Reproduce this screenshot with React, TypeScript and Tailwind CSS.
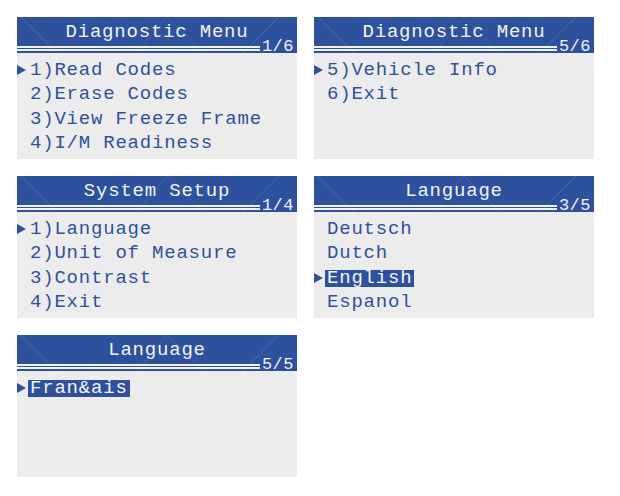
import React from 'react';

type PanelProps = {
  title: string;
  page: string;
  items: string[];
  selected: number;
  highlight?: boolean;
};

const Marker: React.FC = () => (
  <svg width="9" height="10" viewBox="0 0 9 10" className="block">
    <polygon points="0,0 9,5 0,10" fill="#2d519c" />
  </svg>
);

const Panel: React.FC<PanelProps> = ({ title, page, items, selected, highlight }) => {
  return (
    <div className="h-[142px] w-[280px] bg-[#ececec] flex flex-col">
      {/* header */}
      <div className="relative h-[36px] bg-[#2d519c] flex flex-col">
        <svg className="absolute inset-0 pointer-events-none" width="280" height="36">
          <line x1="4" y1="0" x2="40" y2="36" stroke="#ffffff" strokeOpacity="0.13" strokeWidth="1" />
          <line x1="120" y1="36" x2="150" y2="0" stroke="#ffffff" strokeOpacity="0.1" strokeWidth="1" />
          <line x1="150" y1="0" x2="186" y2="36" stroke="#ffffff" strokeOpacity="0.1" strokeWidth="1" />
          <line x1="226" y1="36" x2="262" y2="0" stroke="#ffffff" strokeOpacity="0.13" strokeWidth="1" />
        </svg>
        <div className="relative h-[24px] pt-[5px] text-center text-[19px] leading-[20px] tracking-[0.8px] text-[#f3f3f3]">
          {title}
        </div>
        <div className="relative h-[12px] flex items-start">
          <div className="flex-1 mt-[5px] flex flex-col gap-[1px]">
            <div className="h-[2px] bg-[#f3f3f3]" />
            <div className="h-[2px] bg-[#f3f3f3]" />
          </div>
          <span className="ml-[2px] pr-[3px] text-[17px] leading-[12px] tracking-[0.5px] text-[#f3f3f3]">
            {page}
          </span>
        </div>
      </div>

      {/* body */}
      <div className="pt-[5px] flex flex-col">
        {items.map((item, i) => (
          <div key={item} className="flex items-center h-[24.5px]">
            <div className="w-[11px] flex items-center">{i === selected && <Marker />}</div>
            {highlight && i === selected ? (
              <span className="px-[2px] bg-[#2d519c] text-[#f5f5f5] text-[19px] leading-[17px] tracking-[0.8px]">
                {item}
              </span>
            ) : (
              <span className="px-[2px] text-[#2f529b] text-[19px] leading-[17px] tracking-[0.8px]">{item}</span>
            )}
          </div>
        ))}
      </div>
    </div>
  );
};

const App: React.FC = () => {
  return (
    <div className="w-[620px] h-[496px] bg-white pl-[17px] pt-[17px] font-['Liberation_Mono',monospace]">
      <div className="grid grid-cols-[280px_280px] gap-x-[17px] gap-y-[17px]">
        <Panel
          title="Diagnostic Menu"
          page="1/6"
          items={['1)Read Codes', '2)Erase Codes', '3)View Freeze Frame', '4)I/M Readiness']}
          selected={0}
        />
        <Panel title="Diagnostic Menu" page="5/6" items={['5)Vehicle Info', '6)Exit']} selected={0} />
        <Panel
          title="System Setup"
          page="1/4"
          items={['1)Language', '2)Unit of Measure', '3)Contrast', '4)Exit']}
          selected={0}
        />
        <Panel
          title="Language"
          page="3/5"
          items={['Deutsch', 'Dutch', 'English', 'Espanol']}
          selected={2}
          highlight
        />
        <Panel title="Language" page="5/5" items={['Fran&ais']} selected={0} highlight />
      </div>
    </div>
  );
};

export default App;
